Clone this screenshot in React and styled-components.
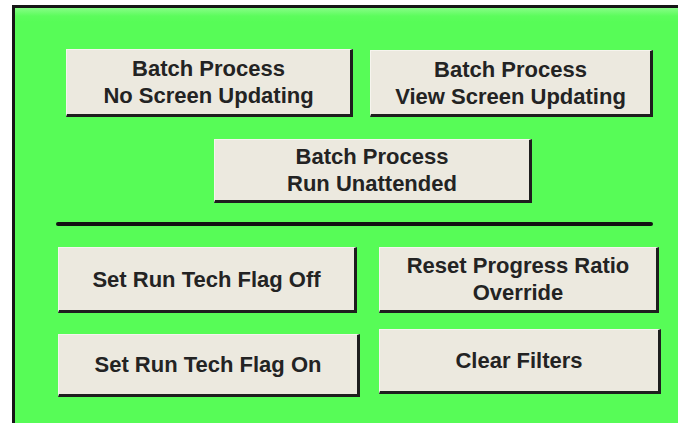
import React from 'react'
import styled, { createGlobalStyle } from 'styled-components'

const GlobalStyle = createGlobalStyle`
  html, body {
    margin: 0;
    padding: 0;
    background: #ffffff;
    overflow: hidden;
  }
  body {
    font-family: "Liberation Sans", Arial, sans-serif;
  }
`

function App() {
  return (
    <>
      <GlobalStyle />
      <Panel>
        <Row pad={51} gap={17} top={41}>
          <MacroButton w={287} h={68}>Batch Process<br />No Screen Updating</MacroButton>
          <MacroButton w={283} h={67} drop={1}>Batch Process<br />View Screen Updating</MacroButton>
        </Row>
        <Row pad={199} top={22}>
          <MacroButton w={318} h={64}>Batch Process<br />Run Unattended</MacroButton>
        </Row>
        <Divider />
        <Row pad={43} gap={22} top={21}>
          <MacroButton w={299} h={66}>Set Run Tech Flag Off</MacroButton>
          <MacroButton w={280} h={66}>Reset Progress Ratio<br />Override</MacroButton>
        </Row>
        <Row pad={43} gap={19} top={16}>
          <MacroButton w={302} h={63} drop={5}>Set Run Tech Flag On</MacroButton>
          <MacroButton w={282} h={65}>Clear Filters</MacroButton>
        </Row>
      </Panel>
    </>
  )
}

export default App

const Panel = styled.div`
  margin: 5px 0 0 12px;
  width: calc(100vw - 12px);
  height: calc(100vh - 5px);
  box-sizing: border-box;
  overflow: hidden;
  border-top: 3px solid #161616;
  border-left: 3px solid #161616;
  background: linear-gradient(to bottom, #86fd86 0px, #5cfc5c 8px, #57fc57 14px, #57fc57 100%);
  display: flex;
  flex-direction: column;
`

const Row = styled.div`
  display: flex;
  flex-shrink: 0;
  align-items: flex-start;
  gap: ${p => p.gap || 0}px;
  padding-left: ${p => p.pad}px;
  margin-top: ${p => p.top}px;
`

const MacroButton = styled.div`
  width: ${p => p.w}px;
  height: ${p => p.h}px;
  flex-shrink: 0;
  margin-top: ${p => p.drop || 0}px;
  box-sizing: border-box;
  background: #ece9df;
  border-top: 1px solid #f6f4ee;
  border-left: 1px solid #f6f4ee;
  border-right: 3px solid #1e1e1e;
  border-bottom: 3px solid #1e1e1e;
  display: flex;
  align-items: center;
  justify-content: center;
  text-align: center;
  font-family: "Liberation Sans", Arial, sans-serif;
  font-weight: bold;
  font-size: 22px;
  line-height: 27px;
  color: #232323;
  cursor: pointer;
`

const Divider = styled.div`
  flex-shrink: 0;
  margin: 19px 0 0 41px;
  width: 597px;
  height: 4px;
  border-radius: 2px;
  background: #121212;
`
